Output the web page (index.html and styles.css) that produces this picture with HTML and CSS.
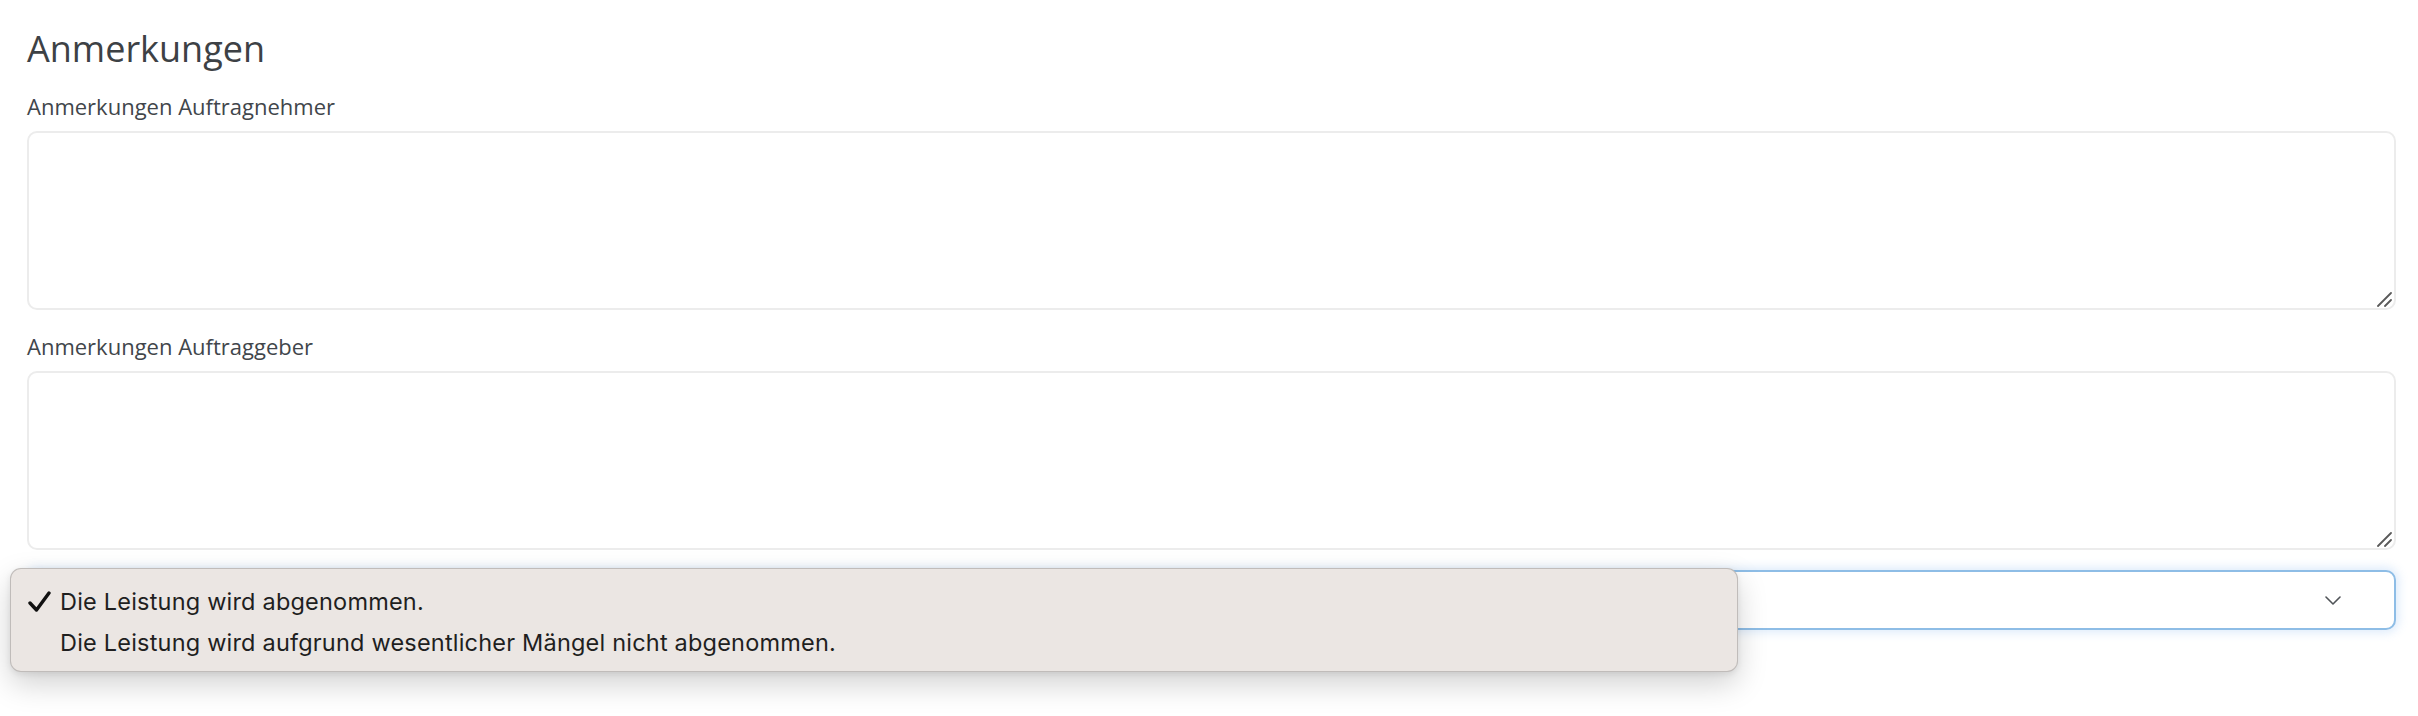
FILE: index.html
```html
<!DOCTYPE html>
<html lang="de">
<head>
<meta charset="utf-8">
<title>Anmerkungen</title>
<link rel="stylesheet" href="styles.css">
</head>
<body>
<div class="page">
  <h2 class="title">Anmerkungen</h2>
  <div class="field">
    <label class="label">Anmerkungen Auftragnehmer</label>
    <div class="area-wrap">
      <textarea class="area"></textarea>
      <svg class="grip" width="16" height="16" viewBox="0 0 16 16"><path d="M2 15 L15 2 M9 15 L15 9" fill="none" stroke="#5a5a5a" stroke-width="1.8" stroke-linecap="round"/></svg>
    </div>
  </div>
  <div class="field">
    <label class="label">Anmerkungen Auftraggeber</label>
    <div class="area-wrap">
      <textarea class="area"></textarea>
      <svg class="grip" width="16" height="16" viewBox="0 0 16 16"><path d="M2 15 L15 2 M9 15 L15 9" fill="none" stroke="#5a5a5a" stroke-width="1.8" stroke-linecap="round"/></svg>
    </div>
  </div>
  <div class="select-wrap">
    <div class="select">
      <svg class="chevron" width="16" height="9" viewBox="0 0 16 9"><path d="M1 1 L8 8 L15 1" fill="none" stroke="#505458" stroke-width="1.6" stroke-linecap="round" stroke-linejoin="round"/></svg>
    </div>
    <div class="popup">
      <div class="opt">
        <span class="check"><svg width="23" height="21" viewBox="0 0 23 21"><path d="M2 12 L8.5 19 L21 2" fill="none" stroke="#111" stroke-width="3.4" stroke-linecap="round" stroke-linejoin="round"/></svg></span>
        <span>Die Leistung wird abgenommen.</span>
      </div>
      <div class="opt">
        <span class="check"></span>
        <span>Die Leistung wird aufgrund wesentlicher Mängel nicht abgenommen.</span>
      </div>
    </div>
  </div>
</div>
</body>
</html>
```

FILE: styles.css
```css
html, body {
  margin: 0;
  padding: 0;
  background: #ffffff;
}
body {
  font-family: "Open Sans", "Liberation Sans", sans-serif;
  color: #3f4347;
  min-height: 716px;
}
.page {
  padding: 27px 22px 90px 27px;
  display: flex;
  flex-direction: column;
}
.title {
  margin: 0 0 19px 0;
  font-size: 36px;
  line-height: 44px;
  font-weight: 400;
  color: #3d4145;
}
.field {
  display: flex;
  flex-direction: column;
  margin-bottom: 20px;
}
.label {
  font-size: 22px;
  line-height: 33px;
  margin-bottom: 8px;
  color: #41464b;
}
.area-wrap {
  position: relative;
}
.area {
  box-sizing: border-box;
  height: 179px;
  width: 100%;
  border: 2px solid #ececec;
  border-radius: 10px;
  background: #fff;
  margin: 0;
  display: block;
  resize: none;
  font-family: inherit;
}
.grip {
  position: absolute;
  right: 4px;
  bottom: 3px;
  display: block;
}
.select-wrap {
  position: relative;
}
.select {
  box-sizing: border-box;
  height: 60px;
  border: 2px solid #8ebde6;
  border-radius: 10px;
  background: #fff;
  box-shadow: 0 0 10px 3px rgba(110, 170, 235, 0.22);
  display: flex;
  align-items: center;
  justify-content: flex-end;
  padding-right: 53px;
}
.chevron {
  display: block;
}
.popup {
  position: absolute;
  left: -17px;
  top: -2px;
  width: 1728px;
  box-sizing: border-box;
  height: 104px;
  background: #ebe6e3;
  border: 1px solid rgba(0, 0, 0, 0.18);
  border-radius: 11px;
  box-shadow: 0 12px 30px rgba(0, 0, 0, 0.18), 0 2px 6px rgba(0, 0, 0, 0.08);
  padding: 12px 0 0 17px;
  font-family: Inter, "Liberation Sans", Arial, sans-serif;
  font-size: 23.5px;
  letter-spacing: 0.2px;
  color: #1f1f1f;
}
.opt {
  display: flex;
  align-items: center;
  height: 41px;
}
.check {
  width: 32px;
  flex: none;
  display: flex;
  align-items: center;
}
.check svg {
  display: block;
}
```
